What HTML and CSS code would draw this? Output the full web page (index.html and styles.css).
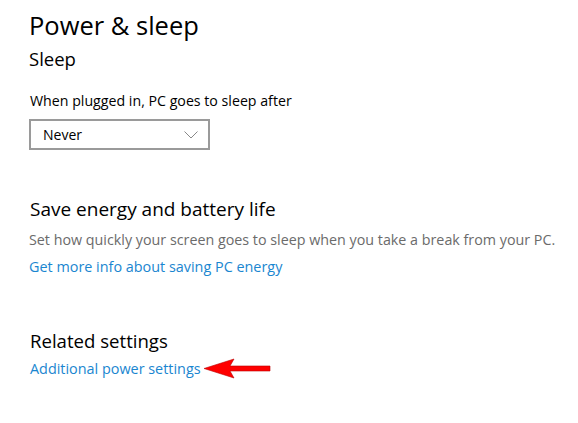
FILE: index.html
```html
<!DOCTYPE html>
<html>
<head>
<meta charset="utf-8">
<link rel="stylesheet" href="styles.css">
</head>
<body>
<main class="page">
  <h1 class="title">Power &amp; sleep</h1>
  <h2 class="sub">Sleep</h2>
  <div class="label">When plugged in, PC goes to sleep after</div>
  <div class="select">
    <span class="select-text">Never</span>
    <svg class="chev" width="14" height="8" viewBox="0 0 14 8"><path d="M0.5 0.5 L7 7 L13.5 0.5" fill="none" stroke="#888" stroke-width="1"/></svg>
  </div>
  <h2 class="section">Save energy and battery life</h2>
  <p class="desc">Set how quickly your screen goes to sleep when you take a break from your PC.</p>
  <a class="link link-energy" href="#">Get more info about saving PC energy</a>
  <h2 class="section related">Related settings</h2>
  <div class="link-row">
    <a class="link" href="#">Additional power settings</a>
    <svg class="arrow" width="68" height="22" viewBox="0 0 68 22"><path d="M0 10.5 L30 1 L26 8 L66 8 L66 13 L26 13 L30 20 Z" fill="#f00" stroke="#b00" stroke-width="0.6" stroke-linejoin="round"/></svg>
  </div>
</main>
</body>
</html>
```
FILE: styles.css
```css
html, body {
  margin: 0;
  padding: 0;
  background: #fff;
}
.page {
  padding: 8px 0 0 29px;
  font-family: "Segoe UI", "Open Sans", "Noto Sans", sans-serif;
  color: #000;
}
.title {
  margin: 0;
  font-size: 25.5px;
  font-weight: 400;
  line-height: 34px;
}
.sub {
  margin: 4px 0 0 0;
  font-size: 18.5px;
  font-weight: 400;
  line-height: 26px;
}
.label {
  margin: 19px 0 0 1px;
  font-size: 14.2px;
  line-height: 20px;
}
.select {
  margin: 8px 0 0 0;
  box-sizing: border-box;
  width: 181px;
  height: 31px;
  border: 2px solid #9a9a9a;
  display: flex;
  align-items: center;
  justify-content: space-between;
  padding: 0 10px 0 12px;
}
.select-text {
  font-size: 14px;
  line-height: 20px;
}
.chev {
  display: block;
}
.section {
  margin: 46px 0 0 1px;
  font-size: 19px;
  font-weight: 400;
  line-height: 26px;
}
.desc {
  margin: 8px 0 0 0;
  font-size: 14.3px;
  line-height: 20px;
  color: #6b6b6b;
}
.link {
  font-size: 14.4px;
  line-height: 20px;
  color: #1a86d0;
  text-decoration: none;
}
.link-energy {
  display: block;
  margin-top: 7px;
}
.related {
  margin-top: 51px;
  font-size: 18.6px;
}
.link-row {
  margin: 4px 0 0 1px;
  display: flex;
  align-items: center;
}
.arrow {
  display: block;
  margin-left: 3px;
}
```
